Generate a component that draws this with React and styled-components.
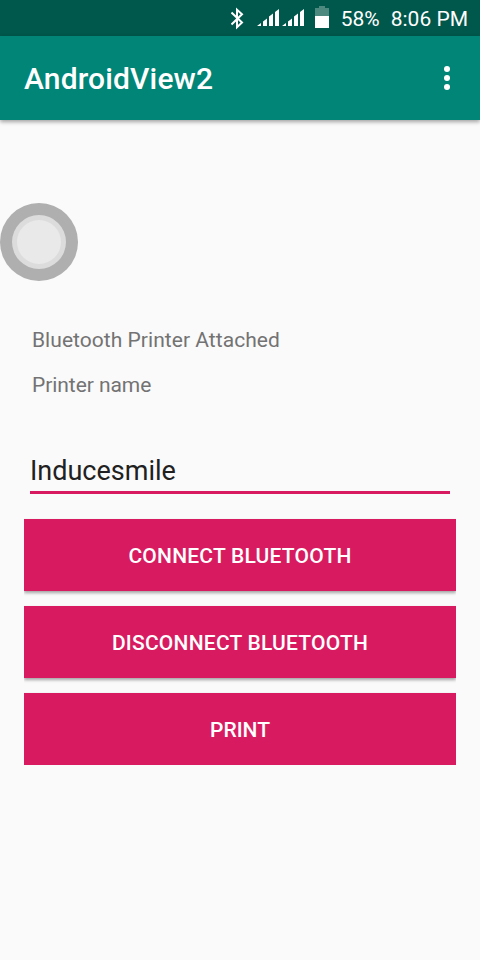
import React from "react";
import styled, { createGlobalStyle } from "styled-components";

const Global = createGlobalStyle`
  * { box-sizing: border-box; }
  body { margin: 0; background: #fafafa; font-family: Roboto, "Noto Sans", sans-serif; }
`;
const Screen = styled.div`
  position: relative;
  width: 480px;
  height: 960px;
  background: #fafafa;
  overflow: hidden;
`;
const StatusBar = styled.div`
  height: 36px;
  padding-right: 12px;
  display: flex;
  align-items: center;
  justify-content: flex-end;
  background: #00574b;
  color: #fff;
  font-size: 21px;
  line-height: 36px;
  white-space: nowrap;
`;
const StatusIcons = styled.svg`
  width: 110px;
  height: 36px;
  flex: none;
`;
const StatusText = styled.span`
  padding-top: 2px;
  min-width: ${(p) => p.$width || 0}px;
`;
const AppBar = styled.header`
  height: 84px;
  padding: 0 18px 0 24px;
  display: flex;
  align-items: center;
  justify-content: space-between;
  background: #008577;
  color: #fff;
  box-shadow: 0 2px 4px rgba(0, 0, 0, 0.35);
`;
const Title = styled.h1`
  margin: 0;
  padding-top: 2px;
  font-size: 30px;
  font-weight: 500;
  line-height: 36px;
  letter-spacing: 0.15px;
`;
const MenuButton = styled.button`
  padding: 0;
  border: 0;
  background: none;
  width: 30px;
  height: 30px;
`;
const AssistiveTouch = styled.svg`
  position: absolute;
  left: 0;
  top: 203px;
  width: 78px;
  height: 78px;
`;
const Content = styled.main`
  padding: 208px 24px 0;
`;
const Label = styled.p`
  margin: 0 0 20px;
  padding-left: 8px;
  font-size: 21px;
  line-height: 25px;
  letter-spacing: ${(p) => p.$tracking}px;
  color: #737373;
`;
const Field = styled.input`
  display: block;
  width: 420px;
  height: 44px;
  margin: 52px 6px 25px;
  padding: 1px 0 0;
  border: 0;
  border-bottom: 3px solid #d81b60;
  border-radius: 0;
  outline: 0;
  background: none;
  font: 27px Roboto, sans-serif;
  color: #212121;
`;
const Actions = styled.div`
  display: grid;
  gap: 15px;
`;
const Action = styled.button`
  height: 72px;
  padding: 2px 0 0;
  border: 0;
  background: #d81b60;
  color: #fff;
  font: 500 21px Roboto, sans-serif;
  letter-spacing: ${(p) => (p.$flat ? 0 : 0.22)}px;
  text-transform: uppercase;
  box-shadow: ${(p) => (p.$flat ? "0 0 1px rgba(0, 0, 0, 0.15)" : "0 2px 3px rgba(0, 0, 0, 0.35)")};
  clip-path: ${(p) => (p.$flat ? "inset(-1px 0 0)" : "inset(-1px 0 -6px)")};
`;

export default function App() {
  return (
    <Screen>
      <Global />
      <StatusBar>
        <StatusIcons viewBox="0 0 110 36">
          <path d="M0.5 12.5L11 22.5L6 27.2V9.8L11 14.2L0.5 24.5" fill="none" stroke="#fff" strokeWidth="2" />
          <path d="M26 26l4-3v3zM32 26v-4.500l4-3V26zM38 26V16.500l4-3V26zM44 26V12l4-3v17z" fill="#fff" />
          <path d="M51 26l4-3v3zM57 26v-4.500l4-3V26zM63 26V16.500l4-3V26zM69 26V12l4-3v17z" fill="#fff" />
          <path d="M84 8h4V6h6v2h4v8H84z" fill="#4d897f" />
          <path d="M84 16h14v12H84z" fill="#fff" />
        </StatusIcons>
        <StatusText $width={50}>58%</StatusText>
        <StatusText>8:06 PM</StatusText>
      </StatusBar>
      <AppBar>
        <Title>AndroidView2</Title>
        <MenuButton aria-label="More options">
          <svg width="30" height="30" fill="#fff">
            <circle cx="15" cy="6" r="3" />
            <circle cx="15" cy="15" r="3" />
            <circle cx="15" cy="24" r="3" />
          </svg>
        </MenuButton>
      </AppBar>
      <AssistiveTouch viewBox="0 0 78 78">
        <circle cx="39" cy="39" r="39" fill="#afafaf" />
        <circle cx="39" cy="39" r="27" fill="#dcdcdc" />
        <circle cx="39" cy="39" r="22" fill="#e9e9e9" />
      </AssistiveTouch>
      <Content>
        <Label $tracking={0.04}>Bluetooth Printer Attached</Label>
        <Label $tracking={-0.06}>Printer name</Label>
        <Field defaultValue="Inducesmile" aria-label="Printer name" />
        <Actions>
          <Action>Connect Bluetooth</Action>
          <Action>Disconnect Bluetooth</Action>
          <Action $flat>Print</Action>
        </Actions>
      </Content>
    </Screen>
  );
}
